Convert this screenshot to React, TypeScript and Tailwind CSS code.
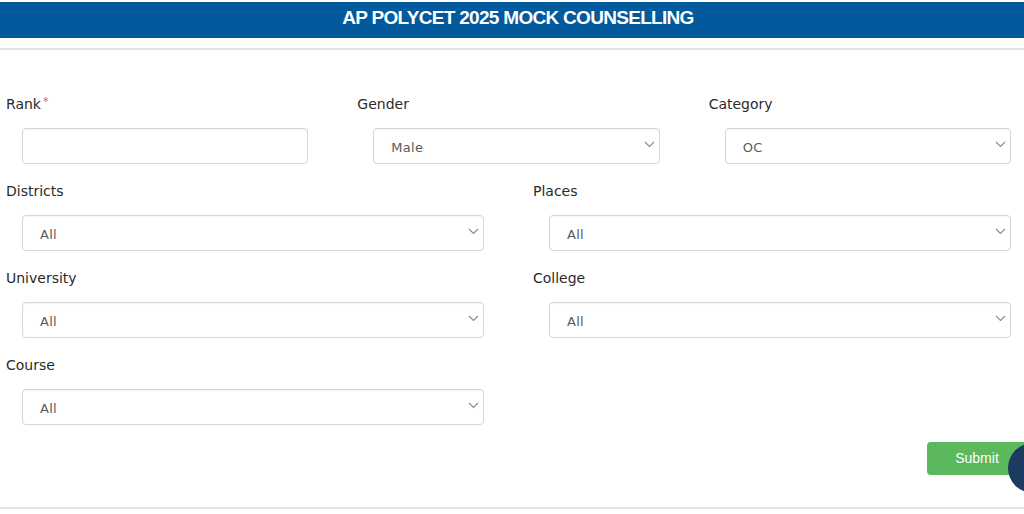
import React from 'react';

const labelCls = "block h-[20px] leading-[20px] pl-[6px] text-[14px] text-[#2a2a2a] font-['DejaVu_Sans',sans-serif]";
const boxCls =
  "ml-[22px] mr-[43px] h-[36px] rounded-[4px] border border-[#d6d6d6] bg-white shadow-[inset_0_1px_1px_rgba(0,0,0,0.04)]";

const Chevron = () => (
  <svg width="11" height="7" viewBox="0 0 11 7" className="shrink-0">
    <path d="M1 1l4.5 4.5L10 1" fill="none" stroke="#8a8a8a" strokeWidth="1.1" />
  </svg>
);

const SelectBox = ({ value }: { value: string }) => (
  <div className={`${boxCls} flex items-center justify-between pl-[17px] pr-[4px] pt-[3px]`}>
    <span className="text-[13px] text-[#5a5a5a] font-['DejaVu_Sans',sans-serif] tracking-[0.3px]">{value}</span>
    <span className="-mt-[6px]">
      <Chevron />
    </span>
  </div>
);

const Field = ({ label, value, required }: { label: string; value?: string; required?: boolean }) => (
  <div>
    <label className={labelCls}>
      {label}
      {required && <sup className="ml-[2px] text-[#e0574f] text-[11px] relative -top-[4px]">*</sup>}
    </label>
    <div className="mt-[14px]">
      {value === undefined ? <div className={boxCls} /> : <SelectBox value={value} />}
    </div>
  </div>
);

export default function App() {
  return (
    <div className="w-[1024px] h-[514px] overflow-hidden bg-white relative">
      <div className="pt-[2px]">
        <div className="h-[36px] bg-[#02599c] flex items-center justify-center pl-[12px] pb-[4px]">
          <h1 className="text-white text-[19px] font-bold tracking-[-0.7px] font-['Liberation_Sans',Arial,sans-serif]">
            AP POLYCET 2025 MOCK COUNSELLING
          </h1>
        </div>
      </div>
      <div className="mt-[10px] border-t-2 border-[#e2e2e2]" />

      <div className="w-[1054px] pt-[44px]">
        <div className="grid grid-cols-3">
          <Field label="Rank" required />
          <Field label="Gender" value="Male" />
          <Field label="Category" value="OC" />
        </div>
        <div className="grid grid-cols-2 mt-[17px]">
          <Field label="Districts" value="All" />
          <Field label="Places" value="All" />
        </div>
        <div className="grid grid-cols-2 mt-[17px]">
          <Field label="University" value="All" />
          <Field label="College" value="All" />
        </div>
        <div className="grid grid-cols-2 mt-[17px]">
          <Field label="Course" value="All" />
        </div>
        <div className="flex justify-end mt-[17px] pr-[27px]">
          <button className="w-[100px] h-[33px] rounded-[4px] bg-[#5cb85c] text-white text-[14px] font-['Liberation_Sans',Arial,sans-serif]">
            Submit
          </button>
        </div>
      </div>

      <div className="absolute left-0 right-0 top-[507px] border-t-2 border-[#e2e2e2]" />
      <div className="absolute left-[1008px] top-[443px] w-[54px] h-[50px] rounded-full bg-[#1c3b5e]" />
    </div>
  );
}
